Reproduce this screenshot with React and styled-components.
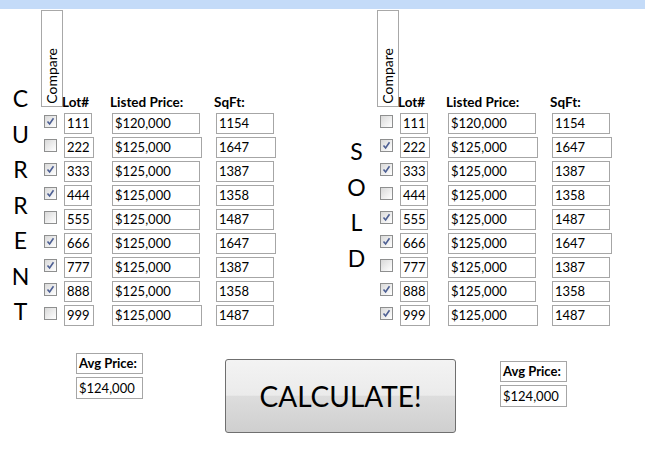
import styled, { createGlobalStyle } from 'styled-components'

const GlobalStyle = createGlobalStyle`
  body {
    margin: 0;
    background: #ffffff;
    font-family: Lato, 'Open Sans', sans-serif;
    color: #000000;
  }
`

const lots = ['111', '222', '333', '444', '555', '666', '777', '888', '999']
const sqft = ['1154', '1647', '1387', '1358', '1487', '1647', '1387', '1358', '1487']
const wide = [
  {},
  { lot: true, price: true, sqft: true },
  {},
  {},
  {},
  { sqft: true },
  {},
  {},
  { lot: true, price: true },
]

const currentChecks = [1, 0, 1, 1, 0, 1, 1, 1, 0]
const soldChecks = [0, 1, 1, 0, 1, 1, 0, 1, 1]

function CheckBox({ checked }) {
  return (
    <Box>
      {checked ? (
        <svg width="9" height="9" viewBox="0 0 9 9">
          <path d="M1.5 4.5 L3.6 7 L7.5 1.2" fill="none" stroke="#4d5f93" strokeWidth="1.6" />
        </svg>
      ) : null}
    </Box>
  )
}

function Section({ word, offset, checks }) {
  return (
    <SectionWrap>
      <Letters $offset={offset}>
        {word.split('').map((ch, i) => (
          <span key={i}>{ch}</span>
        ))}
      </Letters>
      <Table>
        <HeaderRow>
          <CompareBox>
            <CompareText>Compare</CompareText>
          </CompareBox>
          <HeadLabel $w={48}>Lot#</HeadLabel>
          <HeadLabel $w={104}>Listed Price:</HeadLabel>
          <HeadLabel $w={60}>SqFt:</HeadLabel>
        </HeaderRow>
        {lots.map((lot, i) => (
          <Row key={lot}>
            <CheckCell>
              <CheckBox checked={checks[i]} />
            </CheckCell>
            <Cell $w={48}>
              <Field $w={wide[i].lot ? 30 : 28}>{lot}</Field>
            </Cell>
            <Cell $w={104}>
              <Field $w={wide[i].price ? 90 : 88}>{i === 0 ? '$120,000' : '$125,000'}</Field>
            </Cell>
            <Cell $w={60}>
              <Field $w={wide[i].sqft ? 60 : 58}>{sqft[i]}</Field>
            </Cell>
          </Row>
        ))}
      </Table>
    </SectionWrap>
  )
}

function AvgPrice({ top, left }) {
  return (
    <AvgWrap $top={top} $left={left}>
      <AvgLabel>Avg Price:</AvgLabel>
      <AvgValue>$124,000</AvgValue>
    </AvgWrap>
  )
}

export default function App() {
  return (
    <>
      <GlobalStyle />
      <Page>
        <TopBar />
        <Sections>
          <Section word="CURRENT" offset={72} checks={currentChecks} />
          <Section word="SOLD" offset={125} checks={soldChecks} />
        </Sections>
        <Footer>
          <AvgPrice top={23} left={76} />
          <CalcButton>CALCULATE!</CalcButton>
          <AvgPrice top={31} left={44} />
        </Footer>
      </Page>
    </>
  )
}

const Page = styled.div`
  width: 645px;
  height: 454px;
  overflow: hidden;
`

const TopBar = styled.div`
  height: 9px;
  background: #c4dbf8;
`

const Sections = styled.div`
  display: flex;
`

const SectionWrap = styled.div`
  display: flex;
  flex-shrink: 0;
  width: 336px;
`

const Letters = styled.div`
  width: 41px;
  flex-shrink: 0;
  padding-top: ${(p) => p.$offset}px;
  display: flex;
  flex-direction: column;
  align-items: center;
  font-size: 23px;
  line-height: 35.5px;
`

const Table = styled.div`
  display: flex;
  flex-direction: column;
  padding-top: 1px;
`

const HeaderRow = styled.div`
  display: flex;
  align-items: flex-end;
  height: 103px;
`

const CompareBox = styled.div`
  box-sizing: border-box;
  width: 22px;
  height: 97px;
  margin-bottom: 6px;
  margin-right: -1px;
  border: 1px solid #a8a8a8;
  display: flex;
  justify-content: center;
  align-items: flex-end;
  padding-bottom: 2px;
`

const CompareText = styled.span`
  writing-mode: vertical-rl;
  transform: rotate(180deg);
  font-size: 14px;
  line-height: 16px;
`

const HeadLabel = styled.div`
  width: ${(p) => p.$w}px;
  font-size: 13.5px;
  font-weight: 700;
  line-height: 16px;
  margin-bottom: 3px;
`

const Row = styled.div`
  display: flex;
  align-items: flex-start;
  height: 24px;
`

const CheckCell = styled.div`
  width: 23px;
  padding: 2px 0 0 3px;
  box-sizing: border-box;
`

const Box = styled.div`
  box-sizing: border-box;
  width: 13px;
  height: 13px;
  border: 1px solid #8e8f8f;
  background: linear-gradient(135deg, #d9d9d9 0%, #f4f4f4 70%, #ffffff 100%);
  display: flex;
  align-items: center;
  justify-content: center;
`

const Cell = styled.div`
  width: ${(p) => p.$w}px;
`

const Field = styled.div`
  box-sizing: border-box;
  width: ${(p) => p.$w}px;
  height: 21px;
  border: 1px solid #a6a6a6;
  background: #ffffff;
  font-size: 13px;
  line-height: 19px;
  padding-left: 2px;
  white-space: nowrap;
`

const Footer = styled.div`
  display: flex;
  align-items: flex-start;
`

const AvgWrap = styled.div`
  display: flex;
  flex-direction: column;
  gap: 3px;
  margin-top: ${(p) => p.$top}px;
  margin-left: ${(p) => p.$left}px;
`

const AvgLabel = styled.div`
  box-sizing: border-box;
  width: 67px;
  height: 21px;
  border: 1px solid #a6a6a6;
  font-size: 13px;
  font-weight: 700;
  line-height: 19px;
  padding-left: 2px;
`

const AvgValue = styled(AvgLabel)`
  height: 22px;
  line-height: 20px;
  font-weight: 400;
`

const CalcButton = styled.button`
  box-sizing: border-box;
  width: 231px;
  height: 74px;
  margin-top: 29px;
  margin-left: 82px;
  border: 1px solid #6f6f6f;
  border-radius: 3px;
  background: linear-gradient(
    to bottom,
    #f3f3f3 0%,
    #ebebeb 49%,
    #dddddd 50%,
    #cfcfcf 100%
  );
  font-family: Lato, 'Open Sans', sans-serif;
  font-size: 28px;
  color: #000000;
  padding: 0;
  cursor: pointer;
`
